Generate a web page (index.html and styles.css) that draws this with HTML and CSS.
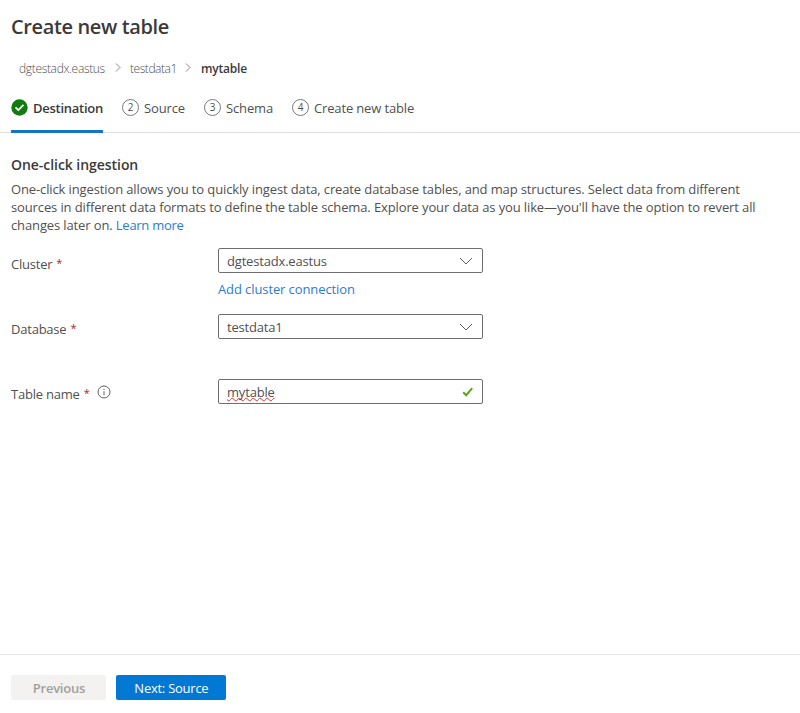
FILE: index.html
```
<!DOCTYPE html>
<html lang="en">
<head>
<meta charset="utf-8">
<title>Create new table</title>
<link rel="stylesheet" href="styles.css">
</head>
<body>
<div class="page">
  <header>
    <h1>Create new table</h1>
    <nav class="crumbs">
      <a class="crumb crumb-cluster">dgtestadx.eastus</a>
      <svg class="sep" width="6" height="9" viewBox="0 0 6 9"><path d="M1 .5l4 4-4 4"/></svg>
      <a class="crumb crumb-db">testdata1</a>
      <svg class="sep" width="6" height="9" viewBox="0 0 6 9"><path d="M1 .5l4 4-4 4"/></svg>
      <span class="crumb current">mytable</span>
    </nav>
  </header>
  <div class="tabs">
    <div class="tab active"><svg class="done" width="17" height="17" viewBox="0 0 17 17"><circle cx="8.5" cy="8.5" r="8.2"/><path d="M4.5 8.3l2.8 2.7 5.2-5.2"/></svg><span>Destination</span></div>
    <div class="tab source"><i class="num">2</i><span>Source</span></div>
    <div class="tab schema"><i class="num">3</i><span>Schema</span></div>
    <div class="tab create"><i class="num">4</i><span>Create new table</span></div>
  </div>
  <main>
    <h2>One-click ingestion</h2>
    <p>One-click ingestion allows you to quickly ingest data, create database tables, and map structures. Select data from different<br>sources in different data formats to define the table schema. Explore your data as you like—you'll have the option to revert all<br>changes later on. <a>Learn more</a></p>
    <div class="row">
      <label class="lab">Cluster <b>*</b></label>
      <div class="field">
        <div class="box"><span>dgtestadx.eastus</span><svg class="chev" width="14" height="8" viewBox="0 0 14 8"><path d="M1 1l6 6 6-6"/></svg></div>
        <a class="add">Add cluster connection</a>
      </div>
    </div>
    <div class="row">
      <label class="lab">Database <b>*</b></label>
      <div class="field"><div class="box"><span>testdata1</span><svg class="chev" width="14" height="8" viewBox="0 0 14 8"><path d="M1 1l6 6 6-6"/></svg></div></div>
    </div>
    <div class="row">
      <label class="lab">Table name <b>*</b><svg class="info" width="14" height="14" viewBox="0 0 14 14"><circle cx="7" cy="7" r="6"/><path d="M7 6.2v4M7 3.8v1.2"/></svg></label>
      <div class="field"><div class="box"><span class="misspelled">mytable</span><svg class="valid" width="12" height="10" viewBox="0 0 12 10"><path d="M1.2 5.2l3 3 6-7"/></svg></div></div>
    </div>
  </main>
  <footer>
    <button class="prev" disabled>Previous</button>
    <button class="next">Next: Source</button>
  </footer>
</div>
</body>
</html>
```
FILE: styles.css
```
* { box-sizing: border-box; }
body { margin: 0; background: #fff; color: #51504f; font: 13px/18px "Open Sans", "Noto Sans", sans-serif; }
.page { height: 713px; display: flex; flex-direction: column; white-space: nowrap; overflow: hidden; }
h1 { margin: 12px 0 0 11px; font-size: 20px; line-height: 30px; font-weight: 600; color: #3b3a39; letter-spacing: -.37px; }
.crumbs { display: flex; align-items: center; margin: 17px 0 0 19px; height: 20px; font-size: 12px; }
.crumb { font-weight: 300; }
.crumb.current { font-weight: 600; color: #3b3a39; letter-spacing: -.2px; }
.crumb-cluster { width: 96px; letter-spacing: -.33px; }
.crumb-db { width: 55px; letter-spacing: -.45px; }
.sep { margin: -3px 9px 0 0; flex: none; fill: none; stroke: #8a8886; }
.crumb-db + .sep { margin-right: 10px; }
.tabs { display: flex; height: 54px; border-bottom: 1px solid #e1dfdd; padding-left: 11px; }
.tab { display: flex; height: 54px; padding-top: 21px; margin-right: 19px; letter-spacing: -.15px; }
.tab span { margin-top: -1px; }
.tab.active { width: 92px; border-bottom: 3px solid #1474c8; font-weight: 600; color: #3b3a39; letter-spacing: -.26px; }
.source { width: 63px; }
.schema { width: 69px; }
.tab svg, .num { flex: none; width: 17px; height: 17px; margin: -1px 5px 0 0; }
.done circle { fill: #107c10; }
.done path { fill: none; stroke: #fff; stroke-width: 1.7; }
.num { border: 1px solid #777; border-radius: 50%; font: 10px/15px "Open Sans", sans-serif; text-align: center; letter-spacing: 0; }
main { flex: 1; padding: 22px 0 0 11px; }
h2 { margin: 0; font-size: 14px; line-height: 20px; font-weight: 600; color: #3b3a39; letter-spacing: -.05px; }
p { margin: 5px 0 0; line-height: 18.2px; height: 68px; letter-spacing: -.122px; }
p a, .add { color: #2b7cd3; }
p a { letter-spacing: -.28px; }
.row { display: flex; height: 65.5px; }
.lab { display: flex; width: 207px; padding-top: 7px; letter-spacing: -.22px; }
.row + .row .lab { padding-top: 6px; }
.lab b { margin: -1px 0 0 4px; font-weight: 400; font-size: 11px; color: #a4262c; }
.info { margin: 0 0 0 8px; fill: none; stroke: #605e5c; }
.box { display: flex; align-items: center; width: 265px; height: 25px; border: 1px solid #706e6c; border-radius: 2px; padding: 1px 9px 0 8px; letter-spacing: -.18px; }
.chev { margin-left: auto; fill: none; stroke: #605e5c; }
.valid { margin: 0 -1px 0 auto; fill: none; stroke: #57a818; stroke-width: 2; }
.misspelled { text-decoration: underline wavy #e03030 1px; text-underline-offset: 0; text-decoration-skip-ink: none; }
.add { display: block; margin-top: 7px; letter-spacing: -.1px; }
footer { display: flex; gap: 10px; height: 59px; border-top: 1px solid #e6e5e4; padding: 20px 0 0 11.4px; }
button { height: 25px; border: 0; border-radius: 2px; padding: 1px 0 0; font: 600 13px/18px "Open Sans", sans-serif; }
.prev { width: 95px; background: #f3f2f1; color: #a19f9d; letter-spacing: -.25px; }
.next { width: 110px; background: #0078d4; color: #fff; font-weight: 500; letter-spacing: -.25px; }
```
